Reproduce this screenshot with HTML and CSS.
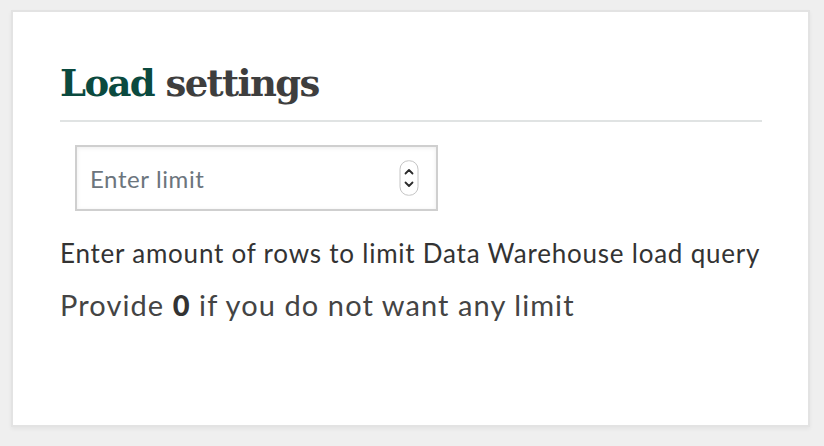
FILE: index.html
```html
<!DOCTYPE html>
<html>
<head>
<meta charset="utf-8">
<link rel="stylesheet" href="styles.css">
</head>
<body>
<div class="card">
  <h2 class="title"><span class="accent">Load</span> settings</h2>
  <div class="field">
    <div class="input">
      <span class="placeholder">Enter limit</span>
      <span class="spinner">
        <svg width="20" height="36" viewBox="0 0 20 36">
          <rect x="1" y="0.75" width="18" height="34.5" rx="8.5" fill="#fff" stroke="#c4c4c4" stroke-width="1"/>
          <path d="M6.5 13.5 L10 10 L13.5 13.5" fill="none" stroke="#2b2b2b" stroke-width="1.8" stroke-linecap="round" stroke-linejoin="round"/>
          <path d="M6.5 22.5 L10 26 L13.5 22.5" fill="none" stroke="#2b2b2b" stroke-width="1.8" stroke-linecap="round" stroke-linejoin="round"/>
        </svg>
      </span>
    </div>
  </div>
  <p class="help">Enter amount of rows to limit Data Warehouse load query</p>
  <p class="note">Provide <b>0</b> if you do not want any limit</p>
</div>
</body>
</html>
```
FILE: styles.css
```css
html, body {
  margin: 0;
  padding: 0;
  background: #efefef;
}
body {
  padding: 10px 14px 19px 11px;
  font-family: Lato, "Open Sans", sans-serif;
  color: #3a3a3a;
}
.card {
  background: #fff;
  border: 2px solid #e3e3e3;
  box-shadow: 0 2px 4px rgba(0,0,0,0.05);
  height: 413px;
  box-sizing: content-box;
  padding: 0 46px 0 47px;
}
.title {
  margin: 0;
  padding-top: 49px;
  padding-bottom: 15px;
  font-family: "DejaVu Serif", serif;
  font-weight: bold;
  font-size: 37px;
  line-height: 44px;
  letter-spacing: -1.6px;
  color: #3e3e3e;
  border-bottom: 2px solid #e0e3e3;
}
.accent { color: #0b4a3f; }
.field {
  padding: 23px 0 0 15px;
}
.input {
  width: 363px;
  height: 66px;
  box-sizing: border-box;
  border: 2px solid #cfcfcf;
  box-shadow: inset 0 1px 4px rgba(0,0,0,0.08);
  display: flex;
  align-items: center;
  justify-content: space-between;
  padding: 0 17px 0 13px;
}
.placeholder {
  font-size: 24px;
  letter-spacing: 0.6px;
  color: #6c757d;
}
.spinner { display: flex; }
.help {
  margin: 27px 0 0;
  font-size: 26px;
  line-height: 30px;
  letter-spacing: 0.78px;
  white-space: nowrap;
  color: #333;
}
.note {
  margin: 19px 0 0;
  font-size: 29px;
  line-height: 36px;
  letter-spacing: 1.08px;
  white-space: nowrap;
  color: #444;
}
.note b { font-weight: 900; color: #333; }
```
